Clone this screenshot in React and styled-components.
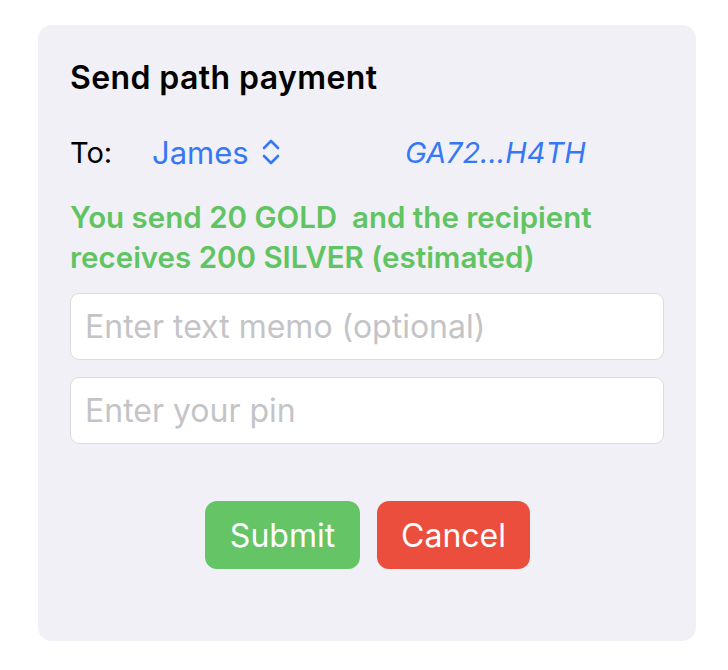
import React from "react";
import styled, { createGlobalStyle } from "styled-components";

const Global = createGlobalStyle`
  html, body { margin: 0; padding: 0; background: #fff; }
  body { font-family: Inter, "Liberation Sans", Arial, sans-serif; -webkit-font-smoothing: antialiased; }
  * { box-sizing: border-box; }
`;

const Card = styled.div`
  margin: 25px 32px 0 38px; height: 616px; background: #f1f0f6; border-radius: 14px;
  padding: 34px 32px 0 32px; display: flex; flex-direction: column;
`;
const Title = styled.div`
  font-weight: 600; font-size: 32px; color: #000; line-height: 38px; letter-spacing: 0.4px;
`;
const ToRow = styled.div`
  display: flex; align-items: center; margin-top: 37px; height: 36px; font-size: 31px;
`;
const ToLabel = styled.div`
  width: 82px; color: #000; font-size: 29px;
`;
const Picker = styled.div`
  display: flex; align-items: center; gap: 13px; color: #3478f6; width: 253px;
`;
const Address = styled.div`
  color: #3478f6; font-style: italic; font-size: 29px;
`;
const Estimate = styled.div`
  margin-top: 27px; color: #60c462; font-weight: 600; font-size: 29.5px; line-height: 40px; white-space: pre-wrap;
`;
const Field = styled.input`
  width: 100%; height: 67px; border: 1px solid #dcdce0; border-radius: 9px; background: #fff;
  padding: 0 14px; font-family: inherit; font-size: 32px; outline: none; color: #000;
  margin-top: ${(p) => p.$gap}px;
  &::placeholder { color: #c4c4c7; }
`;
const Buttons = styled.div`
  display: flex; justify-content: center; gap: 17px; margin-top: 57px; padding-left: 1px;
`;
const Btn = styled.button`
  height: 68px; border: 0; border-radius: 12px; color: #fff; font-family: inherit; font-size: 32px;
  padding: 0; width: ${(p) => p.$w}px; background: ${(p) => p.$bg};
`;

function UpDown() {
  return (
    <svg width="18" height="26" viewBox="0 0 18 26" fill="none" stroke="#3478f6" strokeWidth="2.6" strokeLinecap="round" strokeLinejoin="round">
      <path d="M2 9 L9 2 L16 9" />
      <path d="M2 17 L9 24 L16 17" />
    </svg>
  );
}

export default function App() {
  return (
    <>
      <Global />
      <Card>
        <Title>Send path payment</Title>
        <ToRow>
          <ToLabel>To:</ToLabel>
          <Picker>James <UpDown /></Picker>
          <Address>GA72...H4TH</Address>
        </ToRow>
        <Estimate>{"You send 20 GOLD  and the recipient receives 200 SILVER (estimated)"}</Estimate>
        <Field $gap={16} placeholder="Enter text memo (optional)" />
        <Field $gap={17} placeholder="Enter your pin" type="password" />
        <Buttons>
          <Btn $w={155} $bg="#65c466">Submit</Btn>
          <Btn $w={153} $bg="#eb4e3d">Cancel</Btn>
        </Buttons>
      </Card>
    </>
  );
}
